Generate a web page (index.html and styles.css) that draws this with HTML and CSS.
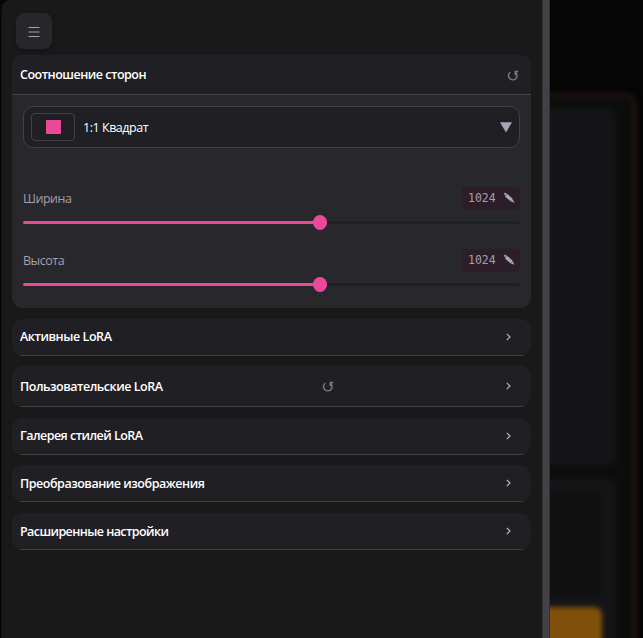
FILE: index.html
```html
<!DOCTYPE html>
<html lang="ru">
<head>
<meta charset="utf-8">
<title>Настройки</title>
<link rel="stylesheet" href="styles.css">
</head>
<body>
<div class="app">
  <aside class="sidebar">
    <button class="menu" aria-label="Меню"><svg width="12" height="12" viewBox="0 0 12 12"><path d="M.5 1.5h11M.5 6h11M.5 10.5h11"/></svg></button>
    <section class="card">
      <header class="card-head tall open">
        <h2 class="t1">Соотношение сторон</h2>
        <svg class="reset" width="12" height="12" viewBox="0 0 12 12"><path d="M3.4 2A4.3 4.3 0 1 0 8.6 2.3M8.3 5.2V1.5H11.2"/></svg>
      </header>
      <div class="card-body">
        <div class="select">
          <span class="preview"><i></i></span>
          <span class="choice">1:1 Квадрат</span>
          <svg class="arrow" width="12" height="11" viewBox="0 0 12 11"><path d="M0 .3h12L6 10.5z"/></svg>
        </div>
        <div class="field">
          <div class="field-head">
            <label>Ширина</label>
            <span class="value">1024 <svg width="12" height="12" viewBox="0 0 12 12"><path class="shaft" d="M3 2.9l5.8 5.4"/><path class="tip" d="M.7 1.8L2.2.4l1.5 1.4-1.5 1.4zM7.8 9.6l2-2 1.7 3.2z"/></svg></span>
          </div>
          <div class="track"><div class="fill"></div><div class="thumb"></div></div>
        </div>
        <div class="field">
          <div class="field-head">
            <label>Высота</label>
            <span class="value">1024 <svg width="12" height="12" viewBox="0 0 12 12"><path class="shaft" d="M3 2.9l5.8 5.4"/><path class="tip" d="M.7 1.8L2.2.4l1.5 1.4-1.5 1.4zM7.8 9.6l2-2 1.7 3.2z"/></svg></span>
          </div>
          <div class="track"><div class="fill"></div><div class="thumb"></div></div>
        </div>
      </div>
    </section>
    <section class="card"><header class="card-head"><h2 class="t2">Активные LoRA</h2><svg class="chev" width="5" height="8" viewBox="0 0 5 8"><path d="M.8.8L4 4 .8 7.2"/></svg></header></section>
    <section class="card raised"><header class="card-head tall"><h2 class="t3">Пользовательские LoRA</h2><svg class="reset" width="12" height="12" viewBox="0 0 12 12"><path d="M3.4 2A4.3 4.3 0 1 0 8.6 2.3M8.3 5.2V1.5H11.2"/></svg><svg class="chev" width="5" height="8" viewBox="0 0 5 8"><path d="M.8.8L4 4 .8 7.2"/></svg></header></section>
    <section class="card"><header class="card-head"><h2 class="t4">Галерея стилей LoRA</h2><svg class="chev" width="5" height="8" viewBox="0 0 5 8"><path d="M.8.8L4 4 .8 7.2"/></svg></header></section>
    <section class="card raised"><header class="card-head"><h2 class="t5">Преобразование изображения</h2><svg class="chev" width="5" height="8" viewBox="0 0 5 8"><path d="M.8.8L4 4 .8 7.2"/></svg></header></section>
    <section class="card"><header class="card-head"><h2 class="t6">Расширенные настройки</h2><svg class="chev" width="5" height="8" viewBox="0 0 5 8"><path d="M.8.8L4 4 .8 7.2"/></svg></header></section>
  </aside>
  <div class="resizer"></div>
  <main class="backdrop">
    <div class="frame">
      <div class="pane canvas"></div>
      <div class="pane prompt"><div class="box"></div><div class="submit"></div></div>
    </div>
  </main>
</div>
</body>
</html>
```

FILE: styles.css
```css
* { box-sizing: border-box; }
body { margin: 0; background: #050505; overflow: hidden; font-family: "Open Sans", "Noto Sans", sans-serif; font-size: 12px; color: #fff; }
svg { display: block; flex: none; }
.app { display: flex; height: 638px; padding-left: 1px; }
.sidebar { flex: none; width: 541px; height: 638px; padding: 13px 11px 0 10px; background: #19191a; border-left: 1px solid #101011; border-top-left-radius: 9px; }
.menu { display: flex; align-items: center; justify-content: center; width: 36px; height: 36px; margin: 0 0 6px 4px; padding: 2px 0 0; border: 0; border-radius: 8px; background: #27272b; box-shadow: 0 2px 4px #0003; }
.menu path { stroke: #a0a4ad; stroke-width: 1; fill: none; }
.card { margin-bottom: 11px; border-radius: 11px; background: #28282c; overflow: hidden; }
.raised { margin-top: -1px; }
.card-head { display: flex; align-items: center; height: 37px; padding: 0 20px 1px 8px; background: #202024; border-bottom: 1px solid #414146; }
.card-head.tall { height: 41px; padding-bottom: 0; }
.card-head.open { height: 40px; padding-right: 12px; }
h2 { margin: 0; padding-top: 1px; font-size: 12.5px; font-weight: 650; line-height: 18px; white-space: nowrap; }
.t1 { padding-top: 0; letter-spacing: -.49px; }
.t2 { letter-spacing: -.43px; }
.t3 { letter-spacing: -.48px; }
.t4 { letter-spacing: -.53px; }
.t5 { padding-top: 2px; letter-spacing: -.47px; }
.t6 { padding-top: 2px; letter-spacing: -.57px; }
.reset { margin: 2px 0 0 auto; }
.t3 + .reset { margin-left: 160px; }
.reset path { fill: none; stroke: #777b84; stroke-width: 1.4; }
.chev { margin-left: auto; }
.chev path { fill: none; stroke: #b4b4bb; stroke-width: 1.2; }
.card-body { height: 213px; padding: 11px 11px 0; }
.select { display: flex; align-items: center; height: 42px; margin-bottom: 38px; padding: 0 7px; border: 1px solid #414146; border-radius: 10px; background: #202024; }
.preview { display: flex; align-items: center; justify-content: center; width: 44px; height: 28px; margin-right: 8px; border: 1px solid #414146; border-radius: 4px; }
.preview i { width: 15px; height: 14px; border-radius: 1px; background: #ec4899; }
.choice { font-size: 12.5px; letter-spacing: -.46px; }
.arrow { margin-left: auto; fill: #a5a8b4; }
.field { height: 62px; }
.field-head { display: flex; align-items: center; justify-content: space-between; height: 25px; }
label { color: #a1a1aa; font-size: 12.5px; letter-spacing: -.48px; }
.value { display: flex; align-items: center; justify-content: space-between; width: 58px; height: 23px; padding: 0 5px 1px 6px; border-radius: 4px; background: #2c1d28; color: #a1a1aa; font: 11.5px "DejaVu Sans Mono", monospace; }
.shaft { stroke: #a7a9b4; stroke-width: 3.4; }
.tip { fill: #a7a9b4; }
.track { position: relative; height: 3px; margin-top: 10px; border-radius: 2px; background: #202024; }
.fill { width: 297px; height: 3px; border-radius: 2px 0 0 2px; background: #ec4899; }
.thumb { position: absolute; left: 290px; top: -6px; width: 14px; height: 15px; border-radius: 50%; background: #ec4899; }
.resizer { flex: none; width: 8px; height: 638px; background: #414146; border: solid #303035; border-width: 0 1px; }
.backdrop { flex: 1; min-width: 0; height: 638px; padding-top: 93px; overflow: hidden; background: #050505; }
.frame { width: 107px; height: 580px; margin-left: -20px; border: 4px solid #24130f; border-radius: 12px; background: #0c0c0c; padding: 11px 0; filter: blur(2.5px); }
.pane { width: 82px; background: #141416; border-radius: 8px; }
.canvas { height: 358px; }
.prompt { height: 180px; margin-top: 12px; padding-top: 15px; }
.box { width: 67px; height: 103px; border-radius: 6px; background: #101011; }
.submit { width: 68px; height: 60px; margin-top: 11px; border-radius: 8px; background: #80500a; }
```
